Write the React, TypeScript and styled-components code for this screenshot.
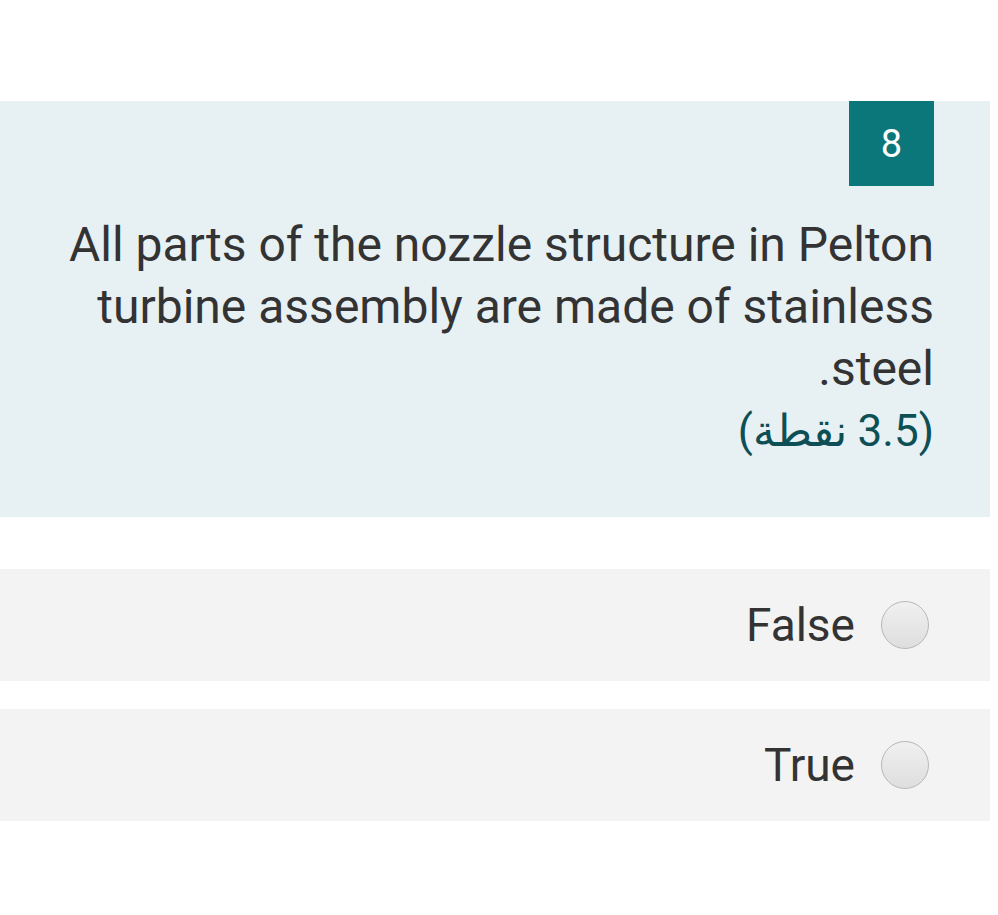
import styled, { createGlobalStyle } from "styled-components";

const GlobalStyle = createGlobalStyle`
  html, body {
    margin: 0;
    padding: 0;
    background: #ffffff;
    font-family: Roboto, "Noto Sans", "Liberation Sans", sans-serif;
  }
`;

const Page = styled.div`
  width: 990px;
  padding-top: 101px;
  direction: rtl;
`;

const QuestionCard = styled.section`
  background: #e7f0f3;
  padding: 0 56px 55px 40px;
  display: flex;
  flex-direction: column;
  align-items: flex-start;
`;

const Badge = styled.div`
  width: 85px;
  height: 85px;
  background: #0b777a;
  color: #ffffff;
  font-size: 38px;
  display: flex;
  align-items: center;
  justify-content: center;
`;

const QuestionText = styled.p`
  margin: 28px 0 0;
  font-size: 48px;
  line-height: 62px;
  color: #333333;
  text-align: right;
`;

const Points = styled.div`
  font-size: 44px;
  line-height: 62px;
  color: #0d4f55;
`;

const Options = styled.div`
  margin-top: 52px;
  display: flex;
  flex-direction: column;
  gap: 28px;
`;

const OptionRow = styled.label`
  height: 112px;
  background: #f3f3f3;
  display: flex;
  align-items: center;
  gap: 26px;
  padding-right: 61px;
  cursor: pointer;
`;

const Radio = styled.span`
  width: 46px;
  height: 46px;
  border-radius: 50%;
  border: 1px solid #b8b8b8;
  background: linear-gradient(#f0f0f0, #dedede);
  flex-shrink: 0;
`;

const OptionLabel = styled.span`
  font-size: 46px;
  color: #333333;
`;

const options = ["False", "True"];

export default function App() {
  return (
    <>
      <GlobalStyle />
      <Page>
        <QuestionCard>
          <Badge>8</Badge>
          <QuestionText>
            All parts of the nozzle structure in Pelton turbine assembly are
            made of stainless steel.
            <Points>(3.5 نقطة)</Points>
          </QuestionText>
        </QuestionCard>
        <Options>
          {options.map((opt) => (
            <OptionRow key={opt}>
              <Radio />
              <OptionLabel>{opt}</OptionLabel>
            </OptionRow>
          ))}
        </Options>
      </Page>
    </>
  );
}
